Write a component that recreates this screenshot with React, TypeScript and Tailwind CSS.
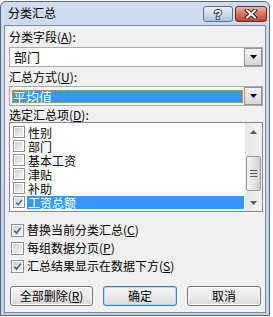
import React from "react";

const font = "font-['Noto_Sans_CJK_SC','Noto_Sans',sans-serif]";

function Check({ className }: { className?: string }) {
  return (
    <svg viewBox="0 0 10 10" className={className}>
      <path d="M1.5 5.2 L4 7.8 L8.6 1.8" fill="none" stroke="#3f5795" strokeWidth="1.7" />
    </svg>
  );
}

function Box({ checked, small }: { checked?: boolean; small?: boolean }) {
  return (
    <div
      className={`${small ? "w-[12px] h-[12px]" : "w-[13px] h-[13px]"} shrink-0 border border-[#8e8f8f] bg-white p-[1px]`}
    >
      <div className="w-full h-full bg-gradient-to-br from-[#cfcfcf] to-[#f7f7f7] flex items-center justify-center">
        {checked && <Check className="w-[9px] h-[9px]" />}
      </div>
    </div>
  );
}

function Arrow({ down = true }: { down?: boolean }) {
  return (
    <svg viewBox="0 0 7 4" className="w-[7px] h-[4px]">
      <path d={down ? "M0 0 H7 L3.5 4 Z" : "M0 4 H7 L3.5 0 Z"} fill="currentColor" />
    </svg>
  );
}

function Combo({ children }: { children: React.ReactNode }) {
  return (
    <div className="flex h-[20px] border border-[#a5a9b0] bg-white">
      <div className="flex-1 flex items-center min-w-0">{children}</div>
      <div className="w-[18px] border border-[#8f9396] bg-gradient-to-b from-[#f4f4f4] to-[#d6d6d6] flex items-center justify-center text-black">
        <Arrow />
      </div>
    </div>
  );
}

const items = ["性别", "部门", "基本工资", "津贴", "补助", "工资总额"];

function Btn({ children, w, primary }: { children: React.ReactNode; w: string; primary?: boolean }) {
  return (
    <div
      className={`${w} h-[20px] rounded-[3px] border flex items-center justify-center text-[12px] bg-gradient-to-b from-[#f3f3f3] via-[#ebebeb] to-[#d8d8d8] ${
        primary ? "border-[#3c7fb1] shadow-[inset_0_0_0_1px_#a7dcf6]" : "border-[#707070] shadow-[inset_0_0_0_1px_#fcfcfc]"
      }`}
    >
      {children}
    </div>
  );
}

export default function App() {
  return (
    <div className={`w-[273px] h-[317px] bg-white overflow-hidden text-[12px] text-black ${font}`}>
      <div className="w-[270px] h-[315px] mt-[1px] rounded-t-[6px] border border-[#55677b] bg-gradient-to-b from-[#cddcef] to-[#bfd2ea] flex flex-col">
        {/* title bar */}
        <div className="h-[23px] flex items-start pl-[7px] pr-[2px]">
          <span className="mt-[4px] leading-[14px]">分类汇总</span>
          <div className="ml-auto mt-[4px] flex gap-[2px]">
            <div className="w-[30px] h-[16px] rounded-[3px] border border-[#5f6f86] bg-gradient-to-b from-[#e9eff7] via-[#cddbec] to-[#adc2dd] flex items-center justify-center">
              <span className="text-white font-bold text-[13px] leading-none [-webkit-text-stroke:2px_#3b4657] [paint-order:stroke_fill] font-['Liberation_Sans',sans-serif]">
                ?
              </span>
            </div>
            <div className="w-[32px] h-[16px] rounded-[3px] border border-[#6b2d24] bg-gradient-to-b from-[#eab2a6] via-[#d47565] to-[#c2402c] flex items-center justify-center">
              <svg viewBox="0 0 14 10" className="w-[14px] h-[10px]">
                <path d="M3 1.5 L11 8.5 M11 1.5 L3 8.5" stroke="#3e2420" strokeWidth="4" strokeLinecap="square" />
                <path d="M3 1.5 L11 8.5 M11 1.5 L3 8.5" stroke="#ffffff" strokeWidth="2" strokeLinecap="square" />
              </svg>
            </div>
          </div>
        </div>

        {/* content */}
        <div className="flex-1 mx-[3px] mb-[2px] border border-[#7c8ba0] bg-[#f0f0f0] pl-[4px] pr-[2px] flex flex-col">
          <div className="mt-[4px] h-[14px] leading-[14px]">
            分类字段(<u>A</u>):
          </div>
          <div className="mt-[3px]">
            <Combo>
              <span className="pl-[4px] text-[13px] leading-[16px]">部门</span>
            </Combo>
          </div>
          <div className="mt-[3px] h-[14px] leading-[14px]">
            汇总方式(<u>U</u>):
          </div>
          <div className="mt-[2px]">
            <Combo>
              <div className="ml-[2px] mr-[1px] flex-1 h-[13px] bg-[#3399ff] outline-1 outline-dotted outline-[#f5a623] -outline-offset-1 text-white text-[13px] leading-[13px] pl-[1px]">
                平均值
              </div>
            </Combo>
          </div>
          <div className="mt-[2px] h-[13px] leading-[13px]">
            选定汇总项(<u>D</u>):
          </div>
          <div className="mt-[1px] h-[90px] border border-[#828790] bg-white flex">
            <div className="flex-1 pt-[2px] pl-[3px] pr-[1px]">
              {items.map((t, i) => (
                <div key={t} className="h-[14px] flex items-center gap-[2px]">
                  <Box small checked={i === 5} />
                  <span
                    className={`flex-1 h-[13px] leading-[13px] pl-[1px] text-[12px] ${
                      i === 5 ? "bg-[#3399ff] text-white" : ""
                    }`}
                  >
                    {t}
                  </span>
                </div>
              ))}
            </div>
            <div className="w-[17px] bg-gradient-to-r from-[#e6e6e6] to-[#f3f3f3] flex flex-col items-center text-[#5a5a5a]">
              <div className="h-[17px] flex items-center justify-center">
                <Arrow down={false} />
              </div>
              <div className="mt-[16px] w-[15px] h-[35px] rounded-[2px] border border-[#989898] bg-gradient-to-r from-[#f3f3f3] via-[#e4e4e4] to-[#cfcfcf] flex flex-col items-center justify-center gap-[2px]">
                <div className="w-[7px] h-[1px] bg-[#5a5a5a]" />
                <div className="w-[7px] h-[1px] bg-[#5a5a5a]" />
                <div className="w-[7px] h-[1px] bg-[#5a5a5a]" />
              </div>
              <div className="mt-auto h-[17px] flex items-center justify-center">
                <Arrow />
              </div>
            </div>
          </div>

          <div className="mt-[9px] pl-[2px] flex flex-col">
            <div className="h-[18px] flex items-center gap-[3px]">
              <Box checked />
              <span>替换当前分类汇总(<u>C</u>)</span>
            </div>
            <div className="h-[18px] flex items-center gap-[3px]">
              <Box />
              <span>每组数据分页(<u>P</u>)</span>
            </div>
            <div className="h-[18px] flex items-center gap-[3px]">
              <Box checked />
              <span>汇总结果显示在数据下方(<u>S</u>)</span>
            </div>
          </div>

          <div className="mt-[11px] pl-[1px] flex">
            <Btn w="w-[83px]">
              全部删除(<u>R</u>)
            </Btn>
            <div className="ml-[10px]">
              <Btn w="w-[74px]" primary>
                确定
              </Btn>
            </div>
            <div className="ml-[10px]">
              <Btn w="w-[74px]">取消</Btn>
            </div>
          </div>
        </div>
      </div>
    </div>
  );
}
